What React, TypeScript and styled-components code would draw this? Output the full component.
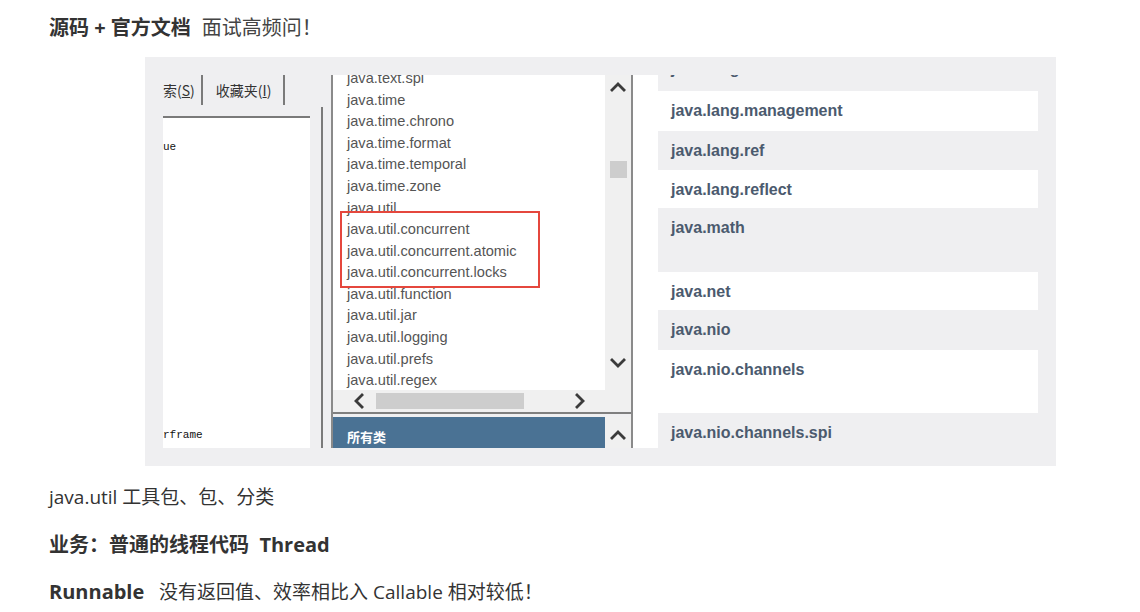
import React from "react";
import styled, { createGlobalStyle } from "styled-components";

const Global = createGlobalStyle`
  html, body { margin: 0; padding: 0; background: #ffffff; }
  body { font-family: "Open Sans", "Noto Sans CJK SC", sans-serif; color: #333; }
`;

const Page = styled.div`
  width: 1140px;
  height: 612px;
  overflow: hidden;
  display: flex;
  flex-direction: column;
`;

const Title = styled.div`
  margin: 15px 0 0 49px;
  line-height: 26px;
  font-size: 20px;
  white-space: pre;
`;

const Strong = styled.span<{ $size?: number }>`
  font-weight: 700;
  color: #333;
  ${(p) => (p.$size ? `font-size: ${p.$size}px;` : "")}
`;

const Plain = styled.span<{ $gap?: number }>`
  font-weight: 400;
  color: #444;
  margin-left: ${(p) => p.$gap ?? 0}px;
`;

const Frame = styled.div`
  margin: 16px 0 0 145px;
  width: 911px;
  height: 409px;
  box-sizing: border-box;
  padding: 18px;
  background: #efeff1;
  display: flex;
`;

const LeftPane = styled.div`
  width: 147px;
  display: flex;
  flex-direction: column;
`;

const Tabs = styled.div`
  height: 41px;
  display: flex;
  align-items: flex-start;
  font-family: "Noto Sans CJK SC", sans-serif;
  font-size: 14px;
  color: #333;
`;

const Tab = styled.div<{ $pl: number; $pr: number }>`
  height: 30px;
  line-height: 30px;
  padding: 0 ${(p) => p.$pr}px 0 ${(p) => p.$pl}px;
  border-right: 2px solid #7a7a7a;
  white-space: nowrap;
  flex-shrink: 0;
`;

const U = styled.span`
  text-decoration: underline;
`;

const LeftList = styled.div`
  flex: 1;
  background: #fff;
  border-top: 2px solid #7a7a7a;
  display: flex;
  flex-direction: column;
  font-family: "Liberation Mono", monospace;
  font-size: 11px;
  color: #111;
`;

const LeftItem = styled.div<{ $top?: boolean }>`
  line-height: 14px;
  ${(p) => (p.$top ? "padding-top: 22px;" : "margin-top: auto; padding-bottom: 6px;")}
`;

const Splitter = styled.div`
  width: 2px;
  margin: 32px 8px 0 11px;
  background: #7a7a7a;
`;

const MiddlePane = styled.div`
  width: 298px;
  border-left: 2px solid #8a8a8a;
  border-right: 2px solid #8a8a8a;
  display: flex;
  flex-direction: column;
`;

const ListGrid = styled.div`
  display: grid;
  grid-template-columns: 272px 26px;
  grid-template-rows: 315px 21px;
`;

const PkgList = styled.div`
  position: relative;
  background: #fff;
  overflow: hidden;
  padding-left: 14px;
  font-family: "Liberation Sans", Arial, sans-serif;
  font-size: 14.6px;
  color: #555;
`;

const PkgItems = styled.div`
  margin-top: -6.8px;
`;

const PkgItem = styled.div`
  line-height: 21.57px;
  white-space: nowrap;
`;

const Highlight = styled.div`
  position: absolute;
  left: 7px;
  top: 136px;
  width: 200px;
  height: 77px;
  box-sizing: border-box;
  border: 2px solid #e5473d;
`;

const VScroll = styled.div`
  background: #f0f0f0;
  display: flex;
  flex-direction: column;
  align-items: center;
  padding-bottom: 14px;
`;

const ArrowBox = styled.div`
  width: 26px;
  height: 26px;
  display: flex;
  align-items: center;
  justify-content: center;
  flex-shrink: 0;
`;

const Track = styled.div`
  flex: 1;
  width: 17px;
`;

const VThumb = styled.div`
  margin-top: 60px;
  width: 17px;
  height: 17px;
  background: #cdcdcd;
`;

const HScroll = styled.div`
  background: #f0f0f0;
  display: flex;
  align-items: center;
  padding: 0 12px 0 14px;
`;

const HArrow = styled.div`
  width: 26px;
  height: 21px;
  display: flex;
  align-items: center;
  justify-content: center;
  flex-shrink: 0;
`;

const HThumb = styled.div`
  margin-left: 3px;
  width: 148px;
  height: 16px;
  background: #cdcdcd;
`;

const Spacer = styled.div`
  flex: 1;
`;

const Corner = styled.div`
  background: #f0f0f0;
`;

const HLine = styled.div`
  margin-top: 1px;
  height: 2px;
  background: #7f7f7f;
`;

const BottomRow = styled.div`
  margin-top: 3px;
  flex: 1;
  display: flex;
`;

const AllClasses = styled.div`
  width: 272px;
  background: #4a7294;
  color: #fff;
  font-family: "Noto Sans CJK SC", sans-serif;
  font-weight: 700;
  font-size: 13px;
  line-height: 16px;
  padding: 12px 0 0 14px;
  box-sizing: border-box;
`;

const SmallScroll = styled.div`
  width: 26px;
  background: #f0f0f0;
  display: flex;
  justify-content: center;
  padding-top: 11px;
  box-sizing: border-box;
`;

const WhiteGutter = styled.div`
  width: 25px;
  background: #fff;
`;

const RightList = styled.div`
  width: 380px;
  display: flex;
  flex-direction: column;
  overflow: hidden;
  font-family: "Liberation Sans", Arial, sans-serif;
  font-weight: 700;
  font-size: 16px;
  color: #4b5a6e;
`;

const Row = styled.div<{ $h: number; $white?: boolean }>`
  height: ${(p) => p.$h}px;
  flex-shrink: 0;
  box-sizing: border-box;
  background: ${(p) => (p.$white ? "#ffffff" : "#efeff1")};
  padding: 10px 0 0 13px;
  line-height: 19px;
  overflow: hidden;
  white-space: nowrap;
`;

const CutRow = styled(Row)`
  padding-top: 0;
`;

const CutText = styled.div`
  margin-top: -16px;
`;

const Para = styled.div<{ $mt: number; $size: number; $bold?: boolean }>`
  margin: ${(p) => p.$mt}px 0 0 49px;
  line-height: 26px;
  font-size: ${(p) => p.$size}px;
  font-weight: ${(p) => (p.$bold ? 700 : 400)};
  color: #333;
  white-space: pre;
`;

type Dir = "up" | "down" | "left" | "right";

const Chevron: React.FC<{ dir: Dir }> = ({ dir }) => {
  const pts: Record<Dir, string> = {
    up: "2,10 8,4 14,10",
    down: "2,5 8,11 14,5",
    left: "10,2 4,8 10,14",
    right: "5,2 11,8 5,14",
  };
  return (
    <svg width="16" height="16" viewBox="0 0 16 16">
      <polyline
        points={pts[dir]}
        fill="none"
        stroke="#3b3b3b"
        strokeWidth="2.8"
        strokeLinecap="square"
        strokeLinejoin="miter"
      />
    </svg>
  );
};

const packages = [
  "java.text.spi",
  "java.time",
  "java.time.chrono",
  "java.time.format",
  "java.time.temporal",
  "java.time.zone",
  "java.util",
  "java.util.concurrent",
  "java.util.concurrent.atomic",
  "java.util.concurrent.locks",
  "java.util.function",
  "java.util.jar",
  "java.util.logging",
  "java.util.prefs",
  "java.util.regex",
];

const rows: { name: string; h: number; white: boolean }[] = [
  { name: "java.lang.management", h: 40, white: true },
  { name: "java.lang.ref", h: 39, white: false },
  { name: "java.lang.reflect", h: 38, white: true },
  { name: "java.math", h: 64, white: false },
  { name: "java.net", h: 38, white: true },
  { name: "java.nio", h: 40, white: false },
  { name: "java.nio.channels", h: 63, white: true },
  { name: "java.nio.channels.spi", h: 35, white: false },
];

export default function App() {
  return (
    <Page>
      <Global />
      <Title>
        <Strong>源码 + 官方文档</Strong>
        <Plain $gap={11}>面试高频问！</Plain>
      </Title>

      <Frame>
        <LeftPane>
          <Tabs>
            <Tab $pl={0} $pr={6}>
              索(<U>S</U>)
            </Tab>
            <Tab $pl={13} $pr={12}>
              收藏夹(<U>I</U>)
            </Tab>
          </Tabs>
          <LeftList>
            <LeftItem $top>ue</LeftItem>
            <LeftItem>rframe</LeftItem>
          </LeftList>
        </LeftPane>
        <Splitter />

        <MiddlePane>
          <ListGrid>
            <PkgList>
              <PkgItems>
                {packages.map((p) => (
                  <PkgItem key={p}>{p}</PkgItem>
                ))}
              </PkgItems>
              <Highlight />
            </PkgList>
            <VScroll>
              <ArrowBox>
                <Chevron dir="up" />
              </ArrowBox>
              <Track>
                <VThumb />
              </Track>
              <ArrowBox>
                <Chevron dir="down" />
              </ArrowBox>
            </VScroll>
            <HScroll>
              <HArrow>
                <Chevron dir="left" />
              </HArrow>
              <HThumb />
              <Spacer />
              <HArrow>
                <Chevron dir="right" />
              </HArrow>
            </HScroll>
            <Corner />
          </ListGrid>
          <HLine />
          <BottomRow>
            <AllClasses>所有类</AllClasses>
            <SmallScroll>
              <Chevron dir="up" />
            </SmallScroll>
          </BottomRow>
        </MiddlePane>

        <WhiteGutter />

        <RightList>
          <CutRow $h={16}>
            <CutText>java.lang</CutText>
          </CutRow>
          {rows.map((r) => (
            <Row key={r.name} $h={r.h} $white={r.white}>
              {r.name}
            </Row>
          ))}
        </RightList>
      </Frame>

      <Para $mt={18} $size={19}>java.util 工具包、包、分类</Para>
      <Para $mt={22} $size={20} $bold>
        业务：普通的线程代码  Thread
      </Para>
      <Para $mt={21} $size={19}>
        <Strong $size={20}>Runnable</Strong>
        {"   没有返回值、效率相比入 Callable 相对较低！"}
      </Para>
    </Page>
  );
}
